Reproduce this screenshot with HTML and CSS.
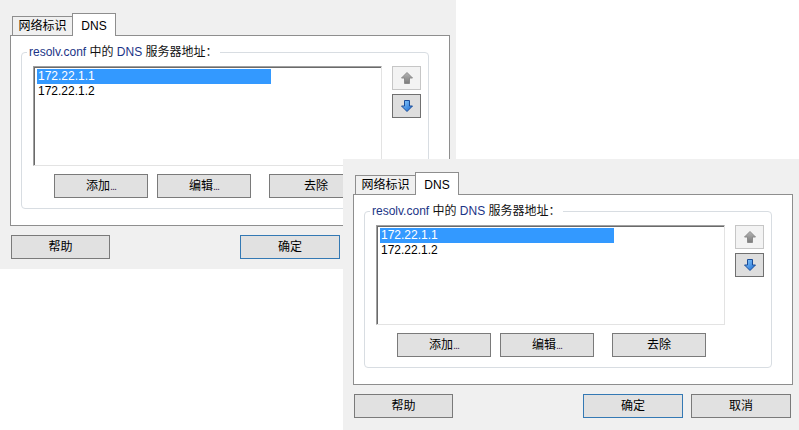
FILE: index.html
```html
<!DOCTYPE html>
<html lang="zh-CN">
<head>
<meta charset="utf-8">
<title>DNS</title>
<link rel="stylesheet" href="styles.css">
</head>
<body>
<div class="desktop">
  <div class="window w1">
    <div class="tabs">
      <div class="tab">网络标识</div>
      <div class="tab active">DNS</div>
    </div>
    <div class="panel">
      <div class="group">
        <div class="legend"><span class="latin">resolv.conf</span> 中的 <span class="latin">DNS</span> 服务器地址：</div>
        <div class="list-row">
          <div class="listbox">
            <div class="item selected">172.22.1.1</div>
            <div class="item">172.22.1.2</div>
          </div>
          <div class="movers">
            <div class="mover disabled">
              <svg width="12" height="12" viewBox="0 0 12 12"><defs><linearGradient id="gu1" x1="0" y1="0" x2="0" y2="1"><stop offset="0" stop-color="#b4b4b4"/><stop offset="1" stop-color="#7c7c7c"/></linearGradient></defs><path d="M6 0.5 L11.5 6 L8.5 6 L8.5 11.5 L3.5 11.5 L3.5 6 L0.5 6 Z" fill="url(#gu1)" stroke="#8c8c8c" stroke-width="1" stroke-linejoin="round"/></svg>
            </div>
            <div class="mover">
              <svg width="12" height="12" viewBox="0 0 12 12"><defs><linearGradient id="gd1" x1="0" y1="0" x2="1" y2="1"><stop offset="0" stop-color="#8fd0ff"/><stop offset="1" stop-color="#1565d0"/></linearGradient></defs><path d="M3.5 0.5 L8.5 0.5 L8.5 6 L11.5 6 L6 11.5 L0.5 6 L3.5 6 Z" fill="url(#gd1)" stroke="#1a4c98" stroke-width="1" stroke-linejoin="round"/></svg>
            </div>
          </div>
        </div>
        <div class="actions">
          <div class="btn">添加<span class="dots">...</span></div>
          <div class="btn b-edit">编辑<span class="dots">...</span></div>
          <div class="btn b-remove">去除</div>
        </div>
      </div>
    </div>
    <div class="footer">
      <div class="btn b-help">帮助</div>
      <div class="btn b-ok default">确定</div>
      <div class="btn b-cancel" aria-hidden="true"></div>
    </div>
  </div>

  <div class="window w2">
    <div class="tabs">
      <div class="tab">网络标识</div>
      <div class="tab active">DNS</div>
    </div>
    <div class="panel">
      <div class="group">
        <div class="legend"><span class="latin">resolv.conf</span> 中的 <span class="latin">DNS</span> 服务器地址：</div>
        <div class="list-row">
          <div class="listbox">
            <div class="item selected">172.22.1.1</div>
            <div class="item">172.22.1.2</div>
          </div>
          <div class="movers">
            <div class="mover disabled">
              <svg width="12" height="12" viewBox="0 0 12 12"><defs><linearGradient id="gu2" x1="0" y1="0" x2="0" y2="1"><stop offset="0" stop-color="#b4b4b4"/><stop offset="1" stop-color="#7c7c7c"/></linearGradient></defs><path d="M6 0.5 L11.5 6 L8.5 6 L8.5 11.5 L3.5 11.5 L3.5 6 L0.5 6 Z" fill="url(#gu2)" stroke="#8c8c8c" stroke-width="1" stroke-linejoin="round"/></svg>
            </div>
            <div class="mover">
              <svg width="12" height="12" viewBox="0 0 12 12"><defs><linearGradient id="gd2" x1="0" y1="0" x2="1" y2="1"><stop offset="0" stop-color="#8fd0ff"/><stop offset="1" stop-color="#1565d0"/></linearGradient></defs><path d="M3.5 0.5 L8.5 0.5 L8.5 6 L11.5 6 L6 11.5 L0.5 6 L3.5 6 Z" fill="url(#gd2)" stroke="#1a4c98" stroke-width="1" stroke-linejoin="round"/></svg>
            </div>
          </div>
        </div>
        <div class="actions">
          <div class="btn">添加<span class="dots">...</span></div>
          <div class="btn b-edit">编辑<span class="dots">...</span></div>
          <div class="btn b-remove">去除</div>
        </div>
      </div>
    </div>
    <div class="footer">
      <div class="btn b-help">帮助</div>
      <div class="btn b-ok default">确定</div>
      <div class="btn b-cancel">取消</div>
    </div>
  </div>
</div>
</body>
</html>
```
FILE: styles.css
```css
html, body {
  margin: 0;
  padding: 0;
  background: #ffffff;
}

.desktop {
  position: relative;
  width: 799px;
  height: 430px;
  overflow: hidden;
  font-family: "Liberation Sans", "Noto Sans CJK SC", sans-serif;
  font-size: 12px;
  color: #000;
}

.window {
  position: absolute;
  width: 456px;
  box-sizing: border-box;
  padding: 13px 6px 0 10px;
  background: #f0f0f0;
}

.w1 {
  left: 0;
  top: 0;
  height: 269px;
}

.w2 {
  left: 343px;
  top: 159px;
  height: 271px;
}

/* tabs */
.tabs {
  display: flex;
  align-items: flex-end;
  height: 22px;
  padding-left: 2px;
  position: relative;
  z-index: 1;
}

.tab {
  box-sizing: border-box;
  width: 60px;
  height: 19px;
  border: 1px solid #8e8e8e;
  border-bottom: none;
  border-right: none;
  background: #f0f0f0;
  display: flex;
  align-items: center;
  justify-content: center;
  line-height: 14px;
}

.tab.active {
  width: 44px;
  height: 23px;
  margin-bottom: -1px;
  border-right: 1px solid #8e8e8e;
  background: #ffffff;
  padding-top: 1px;
}

/* panel */
.panel {
  box-sizing: border-box;
  height: 191px;
  border: 1px solid #8e8e8e;
  background: #ffffff;
  padding: 16px 20px 0 10px;
}

.group {
  box-sizing: border-box;
  height: 157px;
  border: 1px solid #d8dde2;
  border-radius: 4px;
}

.legend {
  width: fit-content;
  margin: -8px 0 0 5px;
  padding: 0 2px;
  background: #ffffff;
  line-height: 14px;
  color: #111;
}

.latin {
  color: #1b3486;
}

.list-row {
  display: flex;
  margin: 7px 0 0 11px;
}

.listbox {
  box-sizing: border-box;
  width: 349px;
  height: 100px;
  border-top: 1px solid #a0a0a0;
  border-left: 1px solid #a0a0a0;
  border-right: 1px solid #e3e3e3;
  border-bottom: 1px solid #e3e3e3;
  box-shadow: inset 1px 1px 0 #6a6a6a;
  padding: 2px 2px 0 3px;
}

.item {
  width: 234px;
  height: 15px;
  line-height: 15px;
  padding-left: 1px;
  box-sizing: border-box;
  white-space: nowrap;
}

.item.selected {
  background: #3399ff;
  color: #ffffff;
}

.movers {
  display: flex;
  flex-direction: column;
  gap: 4px;
  margin-left: 10px;
}

.mover {
  box-sizing: border-box;
  width: 29px;
  height: 24px;
  border: 1px solid #707070;
  background: #dedede;
  display: flex;
  align-items: center;
  justify-content: center;
}

.mover.disabled {
  border-color: #c6c6c6;
  background: #f3f3f3;
}

/* buttons */
.btn {
  box-sizing: border-box;
  width: 94px;
  height: 24px;
  border: 1px solid #7a7a7a;
  background: #e1e1e1;
  display: flex;
  align-items: center;
  justify-content: center;
  line-height: 14px;
  white-space: nowrap;
}

.dots {
  letter-spacing: -1px;
  color: #4a2a5a;
  font-size: 11px;
}

.actions {
  display: flex;
  margin: 8px 0 0 32px;
}

.b-edit {
  margin-left: 9px;
}

.b-remove {
  margin-left: 18px;
}

.footer {
  display: flex;
  margin-top: 9px;
  padding-left: 1px;
}

.b-help {
  width: 99px;
}

.b-ok {
  width: 100px;
  margin-left: auto;
}

.b-cancel {
  width: 100px;
  margin-left: 8px;
  margin-right: 2px;
}

.btn.default {
  border-color: #3479b4;
}
```
